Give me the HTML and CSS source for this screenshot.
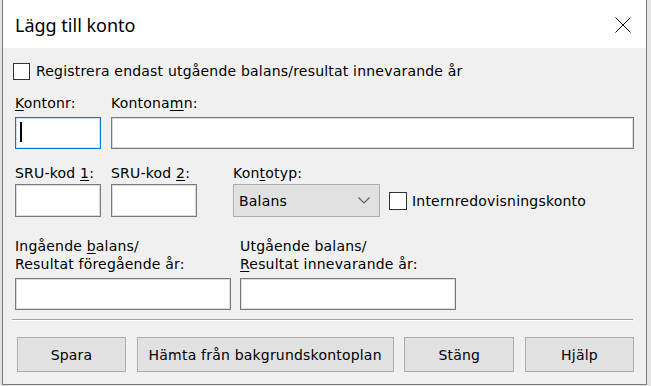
FILE: index.html
```html
<!DOCTYPE html>
<html lang="sv">
<head>
<meta charset="utf-8">
<title>Lägg till konto</title>
<link rel="stylesheet" href="styles.css">
</head>
<body>
<div class="window">
  <div class="titlebar">
    <span class="title">Lägg till konto</span>
    <span class="close">
      <svg width="16" height="16" viewBox="0 0 16 16"><path d="M0.5 0.5 L15.5 15.5 M15.5 0.5 L0.5 15.5" stroke="#000" stroke-width="1" fill="none"/></svg>
    </span>
  </div>
  <div class="body">
    <div class="check top-check"><span class="box"></span><span class="check-text">Registrera endast utgående balans/resultat innevarande år</span></div>

    <div class="row row1">
      <div class="field w-small">
        <div class="lbl"><u>K</u>ontonr:</div>
        <div class="input focus"><span class="caret"></span></div>
      </div>
      <div class="field grow">
        <div class="lbl">Kontona<u>m</u>n:</div>
        <div class="input"></div>
      </div>
    </div>

    <div class="row row2">
      <div class="field w-small">
        <div class="lbl">SRU-kod <u>1</u>:</div>
        <div class="input tall"></div>
      </div>
      <div class="field w-small">
        <div class="lbl">SRU-kod <u>2</u>:</div>
        <div class="input tall"></div>
      </div>
      <div class="field type-field">
        <div class="lbl">Kon<u>t</u>otyp:</div>
        <div class="type-line">
          <div class="select"><span>Balans</span>
            <svg class="chev" width="12" height="7" viewBox="0 0 12 7"><path d="M0.5 0.5 L6 6 L11.5 0.5" stroke="#606060" stroke-width="1.2" fill="none"/></svg>
          </div>
          <div class="check inline-check"><span class="box"></span><span class="check-text">Internredovisningskonto</span></div>
        </div>
      </div>
    </div>

    <div class="row row3">
      <div class="field w-wide">
        <div class="lbl two">Ingående <u>b</u>alans/<br>Resultat föregående år:</div>
        <div class="input"></div>
      </div>
      <div class="field w-wide">
        <div class="lbl two">Utgående balans/<br><u>R</u>esultat innevarande år:</div>
        <div class="input"></div>
      </div>
    </div>

    <div class="sep"></div>

    <div class="buttons">
      <div class="btn b-spara">Spara</div>
      <div class="btn b-hamta">Hämta från bakgrundskontoplan</div>
      <div class="btn b-stang">Stäng</div>
      <div class="btn b-hjalp">Hjälp</div>
    </div>
  </div>
</div>
</body>
</html>
```

FILE: styles.css
```css
html, body {
  margin: 0;
  padding: 0;
}

body {
  background: #e4e4e4;
  font-family: "DejaVu Sans", sans-serif;
  font-size: 14px;
  letter-spacing: 0.2px;
  color: #000;
  width: 651px;
  height: 386px;
  overflow: hidden;
}

.window {
  margin-left: 2px;
  width: 643px;
  height: 384px;
  border-left: 1px solid #7a7a7a;
  border-right: 1px solid #7a7a7a;
  border-bottom: 1px solid #7a7a7a;
  background: #f0f0f0;
  display: flex;
  flex-direction: column;
}

.titlebar {
  height: 48px;
  flex: none;
  background: #fff;
  display: flex;
  align-items: flex-start;
  justify-content: space-between;
  padding: 0 15px 0 12px;
}

.title {
  font-family: "Noto Sans", "Open Sans", sans-serif;
  font-size: 18px;
  letter-spacing: 0;
  line-height: 22px;
  margin-top: 14px;
}

.close {
  margin-top: 17px;
  width: 16px;
  height: 16px;
  display: block;
}

.close svg {
  display: block;
}

.body {
  flex: 1;
  padding: 14px 12px 0 12px;
  display: flex;
  flex-direction: column;
}

.check {
  display: flex;
  align-items: center;
  gap: 6px;
  height: 18px;
  line-height: 16px;
}

.top-check {
  margin-left: -2px;
}

.box {
  width: 15px;
  height: 15px;
  border: 1px solid #333;
  background: #fff;
  flex: none;
}

.row {
  display: flex;
  align-items: flex-end;
}

.row1 {
  margin-top: 15px;
  gap: 10px;
}

.row2 {
  margin-top: 16px;
  gap: 10px;
}

.row3 {
  margin-top: 20px;
  gap: 9px;
}

.field {
  display: flex;
  flex-direction: column;
}

.w-small {
  width: 86px;
}

.w-wide {
  width: 216px;
}

.grow {
  flex: 1;
}

.lbl {
  line-height: 16px;
  white-space: nowrap;
}

.lbl.two {
  line-height: 18px;
}

.row1 .lbl {
  margin-bottom: 6px;
}

.row2 .lbl {
  margin-bottom: 3px;
}

.row3 .lbl {
  margin-bottom: 5px;
}

.lbl u {
  text-decoration-thickness: 1px;
  text-underline-offset: 2px;
}

.input {
  height: 30px;
  background: #fff;
  border: 1px solid #7a7a7a;
  box-shadow: inset 0 0 0 1px #dcdcdc;
  position: relative;
}

.input.tall {
  height: 31px;
}

.input.focus {
  border-color: #0078d7;
  box-shadow: inset 0 0 0 1px #cfe3f6;
}

.caret {
  position: absolute;
  left: 4px;
  top: 4px;
  width: 2px;
  height: 20px;
  background: #000;
}

.type-field {
  margin-left: 26px;
}

.type-line {
  display: flex;
  align-items: center;
  gap: 9px;
}

.select {
  height: 31px;
  background: #e1e1e1;
  border: 1px solid #adadad;
  display: flex;
  align-items: center;
  justify-content: space-between;
  padding: 0 9px 0 5px;
  box-sizing: content-box;
  width: 131px;
}

.chev {
  display: block;
}

.inline-check {
  gap: 5px;
}

.inline-check .box {
  width: 16px;
  height: 16px;
}

.sep {
  margin: 9px 1px 0 -3px;
  height: 1px;
  border-top: 1px solid #a0a0a0;
  background: #fff;
}

.buttons {
  margin-top: 16px;
  padding-left: 2px;
  display: flex;
  justify-content: space-between;
}

.btn {
  height: 33px;
  border: 1px solid #adadad;
  background: #e1e1e1;
  display: flex;
  align-items: center;
  justify-content: center;
  line-height: 16px;
}

.b-spara { width: 107px; }
.b-hamta { width: 255px; }
.b-stang { width: 108px; }
.b-hjalp { width: 107px; }
```
